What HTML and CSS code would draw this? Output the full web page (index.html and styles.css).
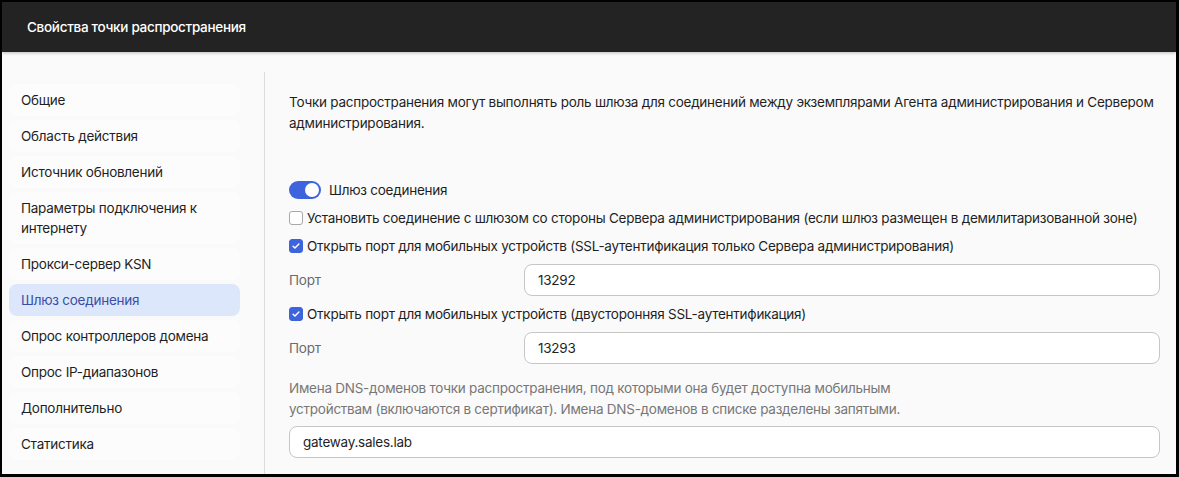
FILE: index.html
```html
<!DOCTYPE html>
<html lang="ru">
<head>
    <meta charset="UTF-8">
    <meta name="viewport" content="width=device-width, initial-scale=1.0">
    <title>Свойства точки распространения</title>
    <link rel="stylesheet" href="styles.css">
</head>
<body>
    <div class="window">
        <!-- Title bar -->
        <div class="title-bar">Свойства точки распространения</div>

        <div class="window-body">
            <!-- Section list -->
            <nav class="side-nav">
                <div class="nav-item">Общие</div>
                <div class="nav-item">Область действия</div>
                <div class="nav-item">Источник обновлений</div>
                <div class="nav-item">Параметры подключения к интернету</div>
                <div class="nav-item">Прокси-сервер KSN</div>
                <div class="nav-item active">Шлюз соединения</div>
                <div class="nav-item">Опрос контроллеров домена</div>
                <div class="nav-item">Опрос IP-диапазонов</div>
                <div class="nav-item">Дополнительно</div>
                <div class="nav-item">Статистика</div>
            </nav>

            <!-- Gateway settings -->
            <main class="content">
                <p class="intro">Точки распространения могут выполнять роль шлюза для соединений между экземплярами Агента администрирования и Сервером администрирования.</p>

                <label class="toggle-row">
                    <span class="toggle on"><span class="knob"></span></span>
                    Шлюз соединения
                </label>

                <label class="check-row">
                    <span class="checkbox"></span>
                    Установить соединение с шлюзом со стороны Сервера администрирования (если шлюз размещен в демилитаризованной зоне)
                </label>
                <label class="check-row">
                    <span class="checkbox checked">
                        <svg viewBox="0 0 14 14"><path d="M3.6 7.2l2.2 2.2 4.6-4.8" fill="none" stroke="#fff" stroke-width="1.7" stroke-linecap="round" stroke-linejoin="round"/></svg>
                    </span>
                    Открыть порт для мобильных устройств (SSL-аутентификация только Сервера администрирования)
                </label>

                <div class="field-row">
                    <span class="field-label">Порт</span>
                    <div class="text-input">13292</div>
                </div>

                <label class="check-row">
                    <span class="checkbox checked">
                        <svg viewBox="0 0 14 14"><path d="M3.6 7.2l2.2 2.2 4.6-4.8" fill="none" stroke="#fff" stroke-width="1.7" stroke-linecap="round" stroke-linejoin="round"/></svg>
                    </span>
                    Открыть порт для мобильных устройств (двусторонняя SSL-аутентификация)
                </label>

                <div class="field-row">
                    <span class="field-label">Порт</span>
                    <div class="text-input">13293</div>
                </div>

                <p class="hint">Имена DNS-доменов точки распространения, под которыми она будет доступна мобильным устройствам (включаются в сертификат). Имена DNS-доменов в списке разделены запятыми.</p>
                <div class="text-input wide">gateway.sales.lab</div>
            </main>
        </div>
    </div>
</body>
</html>
```

FILE: styles.css
```css
/* Page and window frame */
body {
    margin: 0;
    background: #000;
    font-family: Inter, "Noto Sans", "Liberation Sans", sans-serif;
    font-size: 13.5px;
    letter-spacing: -0.25px;
    color: #1f1f1f;
}

.window {
    width: 1179px;
    height: 477px;
    box-sizing: border-box;
    padding: 2px 3px 3px 2px;
    display: flex;
    flex-direction: column;
    overflow: hidden;
}

/* Dark title bar */
.title-bar {
    height: 50px;
    flex: none;
    display: flex;
    align-items: center;
    padding-left: 25px;
    background: #232323;
    color: #fff;
    font-weight: 500;
    letter-spacing: -0.3px;
    box-shadow: 0 1px 3px rgba(0, 0, 0, 0.25);
    position: relative;
    z-index: 1;
}

.window-body {
    flex: 1;
    display: flex;
    background: #fafafa;
    padding-top: 20px;
    min-height: 0;
}

/* Section navigation */
.side-nav {
    width: 231px;
    flex: none;
    padding: 12px 24px 0 7px;
    display: flex;
    flex-direction: column;
    gap: 4px;
}

.nav-item {
    padding: 6px 12px;
    line-height: 20px;
    border-radius: 8px;
    background: #fcfcfc;
}

.nav-item.active {
    background: #dde7fb;
    color: #3a4ea6;
}

/* Settings panel */
.content {
    flex: 1;
    border-left: 1px solid #dcdcdc;
    padding: 20px 16px 0 24px;
    display: flex;
    flex-direction: column;
}

.intro {
    margin: 0;
    line-height: 21px;
}

.toggle-row,
.check-row {
    display: flex;
    align-items: center;
    line-height: 20px;
}

.toggle-row {
    margin-top: 46px;
    gap: 8px;
}

.toggle {
    width: 32px;
    height: 18px;
    border-radius: 9px;
    background: #c4c4c4;
    display: flex;
    align-items: center;
    padding: 0 2px;
    box-sizing: border-box;
}

.toggle.on {
    background: #3d64dc;
    justify-content: flex-end;
}

.knob {
    width: 14px;
    height: 14px;
    border-radius: 50%;
    background: #fff;
}

.check-row {
    margin-top: 8px;
    gap: 4px;
}

.checkbox {
    width: 14px;
    height: 14px;
    box-sizing: border-box;
    border: 1px solid #a8a8a8;
    border-radius: 3px;
    background: #fff;
    flex: none;
    display: flex;
}

.checkbox.checked {
    background: #3d64dc;
    border-color: #3d64dc;
}

.checkbox svg {
    width: 12px;
    height: 12px;
}

.field-row {
    display: grid;
    grid-template-columns: 235px 1fr;
    align-items: center;
    margin-top: 8px;
}

.field-row + .check-row {
    margin-top: 8px;
}

.field-label {
    color: #6b6b6b;
}

.text-input {
    height: 32px;
    box-sizing: border-box;
    border: 1px solid #c6c6c6;
    border-radius: 8px;
    background: #fff;
    padding: 0 13px;
    display: flex;
    align-items: center;
}

.hint {
    margin: 14px 0 0;
    max-width: 622px;
    line-height: 21px;
    color: #777;
}

.text-input.wide {
    margin-top: 6px;
}
```
